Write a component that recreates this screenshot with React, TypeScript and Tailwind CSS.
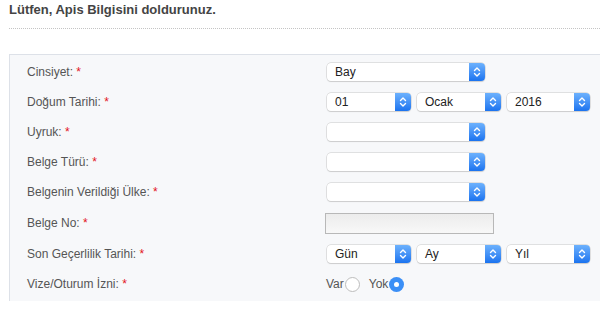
const font = { fontFamily: '"Liberation Sans", Arial, sans-serif' }

const Arrows = () => (
    <svg width="8" height="12" viewBox="0 0 8 12" fill="none" stroke="white" strokeWidth="1.4" strokeLinecap="round" strokeLinejoin="round">
        <path d="M1.5 4.5 L4 2 L6.5 4.5" />
        <path d="M1.5 7.5 L4 10 L6.5 7.5" />
    </svg>
)

const Select = ({ value = '', w }: { value?: string; w: string }) => (
    <div className={`flex h-[18px] ${w} items-stretch rounded-[4px] bg-white shadow-[0_0_0_0.5px_#c8c8c8,0_1px_1px_rgba(0,0,0,0.15)]`}>
        <span className="flex-1 pl-2 text-[12px] leading-[18px] text-[#222]">{value}</span>
        <span className="flex w-[16px] items-center justify-center rounded-r-[4px] bg-gradient-to-b from-[#6cb1fd] to-[#1a73ef]">
            <Arrows />
        </span>
    </div>
)

const Row = ({ label, h = 'h-[30px]', children }: { label: string; h?: string; children?: React.ReactNode }) => (
    <div className={`flex ${h} items-center`}>
        <div className="w-[300px] text-[12px] text-[#555]">
            {label} <span className="text-[#e3141b]">*</span>
        </div>
        <div className="flex items-center">{children}</div>
    </div>
)

const DateSelects = ({ a, b, c }: { a: string; b: string; c: string }) => (
    <div className="flex gap-[6px]">
        <Select value={a} w="w-[84px]" />
        <Select value={b} w="w-[84px]" />
        <Select value={c} w="w-[83px]" />
    </div>
)

const App = () => {
    return (
        <div className="h-[321px] w-[600px] overflow-hidden bg-white pl-[9px]" style={font}>
            <h1 className="pt-[2px] text-[13px] font-bold leading-[16px] text-[#444]">
                Lütfen, Apis Bilgisini doldurunuz.
            </h1>
            <div className="mt-[10px] border-t border-dotted border-[#c4c4c4]" />
            <div className="mt-[25px] border-l border-t border-[#dde1e8] bg-[#f7f8fa] py-[2px] pl-[17px]">
                <Row label="Cinsiyet:">
                    <Select value="Bay" w="w-[158px]" />
                </Row>
                <Row label="Doğum Tarihi:">
                    <DateSelects a="01" b="Ocak" c="2016" />
                </Row>
                <Row label="Uyruk:">
                    <Select w="w-[158px]" />
                </Row>
                <Row label="Belge Türü:">
                    <Select w="w-[158px]" />
                </Row>
                <Row label="Belgenin Verildiği Ülke:">
                    <Select w="w-[158px]" />
                </Row>
                <Row label="Belge No:" h="h-[32px]">
                    <div className="-ml-[2px] h-[21px] w-[169px] border border-[#b8b8b8] bg-gradient-to-b from-[#ececec] to-[#f8f8f8]" />
                </Row>
                <Row label="Son Geçerlilik Tarihi:">
                    <DateSelects a="Gün" b="Ay" c="Yıl" />
                </Row>
                <Row label="Vize/Oturum İzni:">
                    <div className="-ml-[1px] flex items-center text-[12px] text-[#555]">
                        <span>Var</span>
                        <span className="ml-[1px] h-[15px] w-[15px] rounded-full border border-[#bdbdbd] bg-white" />
                        <span className="ml-[9px]">Yok</span>
                        <span className="ml-[1px] flex h-[15px] w-[15px] items-center justify-center rounded-full bg-[#3b8ff6]">
                            <span className="h-[5px] w-[5px] rounded-full bg-white" />
                        </span>
                    </div>
                </Row>
            </div>
        </div>
    )
}

export default App
